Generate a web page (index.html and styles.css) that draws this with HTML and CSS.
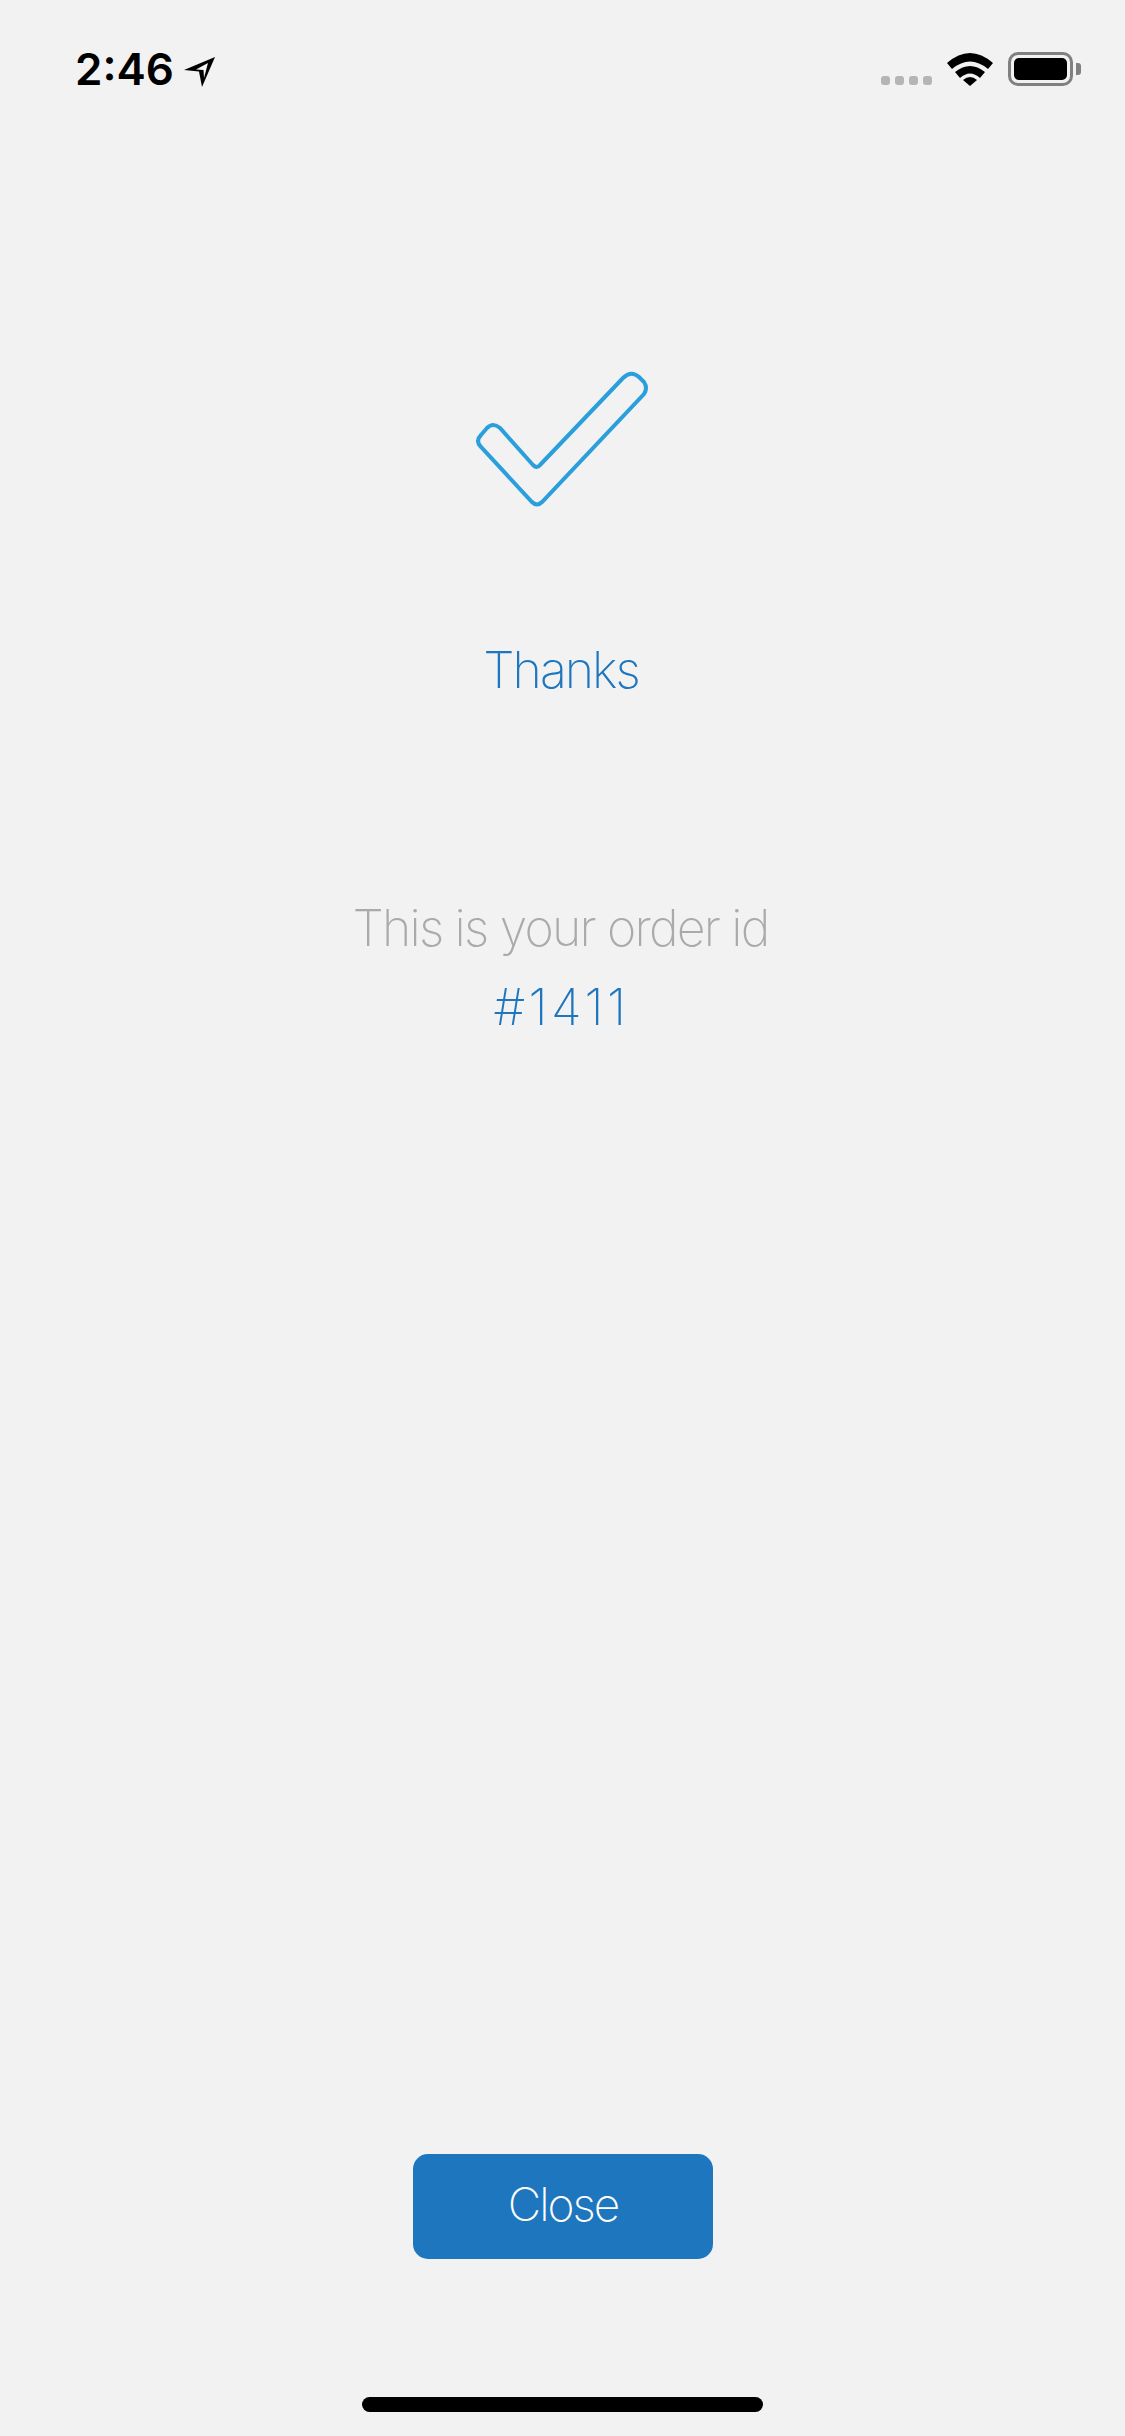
FILE: index.html
```html
<!DOCTYPE html>
<html lang="en">
<head>
    <meta charset="UTF-8">
    <meta name="viewport" content="width=device-width, initial-scale=1.0">
    <title>Order confirmed</title>
    <link rel="stylesheet" href="styles.css">
</head>
<body>
    <div class="statusBar">
        <div class="statusLeft">
            <span class="time">2:46</span>
            <svg class="locationIcon" width="34" height="34" viewBox="0 0 34 34">
                <path d="M32 1 L1 14 L16 15.500 L19 31 Z M25 7 L13 13.500 L20.500 14 L21 22 Z" fill="#000" fill-rule="evenodd"/>
            </svg>
        </div>
        <div class="statusRight">
            <div class="signalDots">
                <span class="dot"></span>
                <span class="dot"></span>
                <span class="dot"></span>
                <span class="dot"></span>
            </div>
            <svg class="wifiIcon" width="46" height="34" viewBox="0 0 46 34">
                <path d="M0 11 Q23 -9 46 11 L41 17 Q23 2 5 17 Z" fill="#000"/>
                <path d="M8 20 Q23 8 38 20 L33 26 Q23 17 13 26 Z" fill="#000"/>
                <path d="M16 28 Q23 22 30 28 L23 34 Z" fill="#000"/>
            </svg>
            <div class="battery">
                <div class="batteryBody"><div class="batteryFill"></div></div>
                <div class="batteryNub"></div>
            </div>
        </div>
    </div>

    <div class="content">
        <svg class="checkIcon" width="200" height="160" viewBox="0 0 200 160">
            <path d="M80 105 L163 18 Q171 10 179 17 L184 22 Q188 28 184 34 L82 142 Q77 147 72 142 L21 87 Q15 81 21 75 L27 68 Q33 62 40 68 L73 105 Q77 109 80 105 Z" fill="none" stroke="#2a9fdc" stroke-width="4"/>
        </svg>
        <h1 class="thanks">Thanks</h1>
        <p class="orderLabel">This is your order id</p>
        <p class="orderId">#1411</p>
        <button class="closeBtn">Close</button>
    </div>

    <div class="homeBar"></div>
</body>
</html>
```

FILE: styles.css
```css
body {
    margin: 0;
    width: 1125px;
    height: 2436px;
    background-color: #f2f2f2;
    font-family: Inter, "Liberation Sans", sans-serif;
    font-weight: 200;
    display: flex;
    flex-direction: column;
    overflow: hidden;
}
.statusBar {
    height: 132px;
    display: flex;
    justify-content: space-between;
    padding: 44px 44px 0 75px;
    box-sizing: border-box;
}
.statusLeft {
    display: flex;
    align-items: flex-start;
    gap: 9px;
}
.time {
    font-size: 44px;
    font-weight: 600;
    line-height: 50px;
    color: #000;
}
.locationIcon {
    margin-top: 12px;
}
.statusRight {
    display: flex;
    align-items: flex-start;
    gap: 15px;
    padding-top: 8px;
}
.signalDots {
    display: flex;
    gap: 5px;
    margin-top: 24px;
}
.dot {
    width: 9px;
    height: 9px;
    border-radius: 3px;
    background-color: #b5b5b5;
}
.battery {
    display: flex;
    align-items: center;
}
.batteryBody {
    width: 65px;
    height: 34px;
    border: 3px solid #808080;
    border-radius: 10px;
    padding: 3px;
    box-sizing: border-box;
}
.batteryFill {
    height: 100%;
    background-color: #000;
    border-radius: 5px;
}
.batteryNub {
    width: 5px;
    height: 12px;
    margin-left: 3px;
    background-color: #808080;
    border-radius: 0 3px 3px 0;
}
.content {
    flex: 1;
    display: flex;
    flex-direction: column;
    align-items: center;
    text-align: center;
}
.checkIcon {
    display: block;
    margin-top: 228px;
    margin-right: 5px;
}
.thanks {
    margin: 120px 3px 0 0;
    font-size: 50px;
    font-weight: 200;
    line-height: 60px;
    letter-spacing: -2px;
    color: #1e76be;
}
.orderLabel {
    margin: 198px 4px 0 0;
    font-size: 50px;
    line-height: 60px;
    letter-spacing: -1.8px;
    color: #aaaaaa;
}
.orderId {
    margin: 19px 2px 0 0;
    font-size: 50px;
    line-height: 60px;
    letter-spacing: 3.5px;
    color: #1e76be;
}
.closeBtn {
    width: 300px;
    height: 105px;
    margin-top: auto;
    margin-left: 1px;
    margin-bottom: 138px;
    padding-bottom: 6px;
    border: none;
    border-radius: 15px;
    background-color: #1e76be;
    color: #fff;
    font-family: inherit;
    font-size: 46px;
    font-weight: 200;
    letter-spacing: -2px;
}
.homeBar {
    width: 401px;
    height: 15px;
    margin: 0 auto 24px;
    background-color: #000;
    border-radius: 8px;
}
```
